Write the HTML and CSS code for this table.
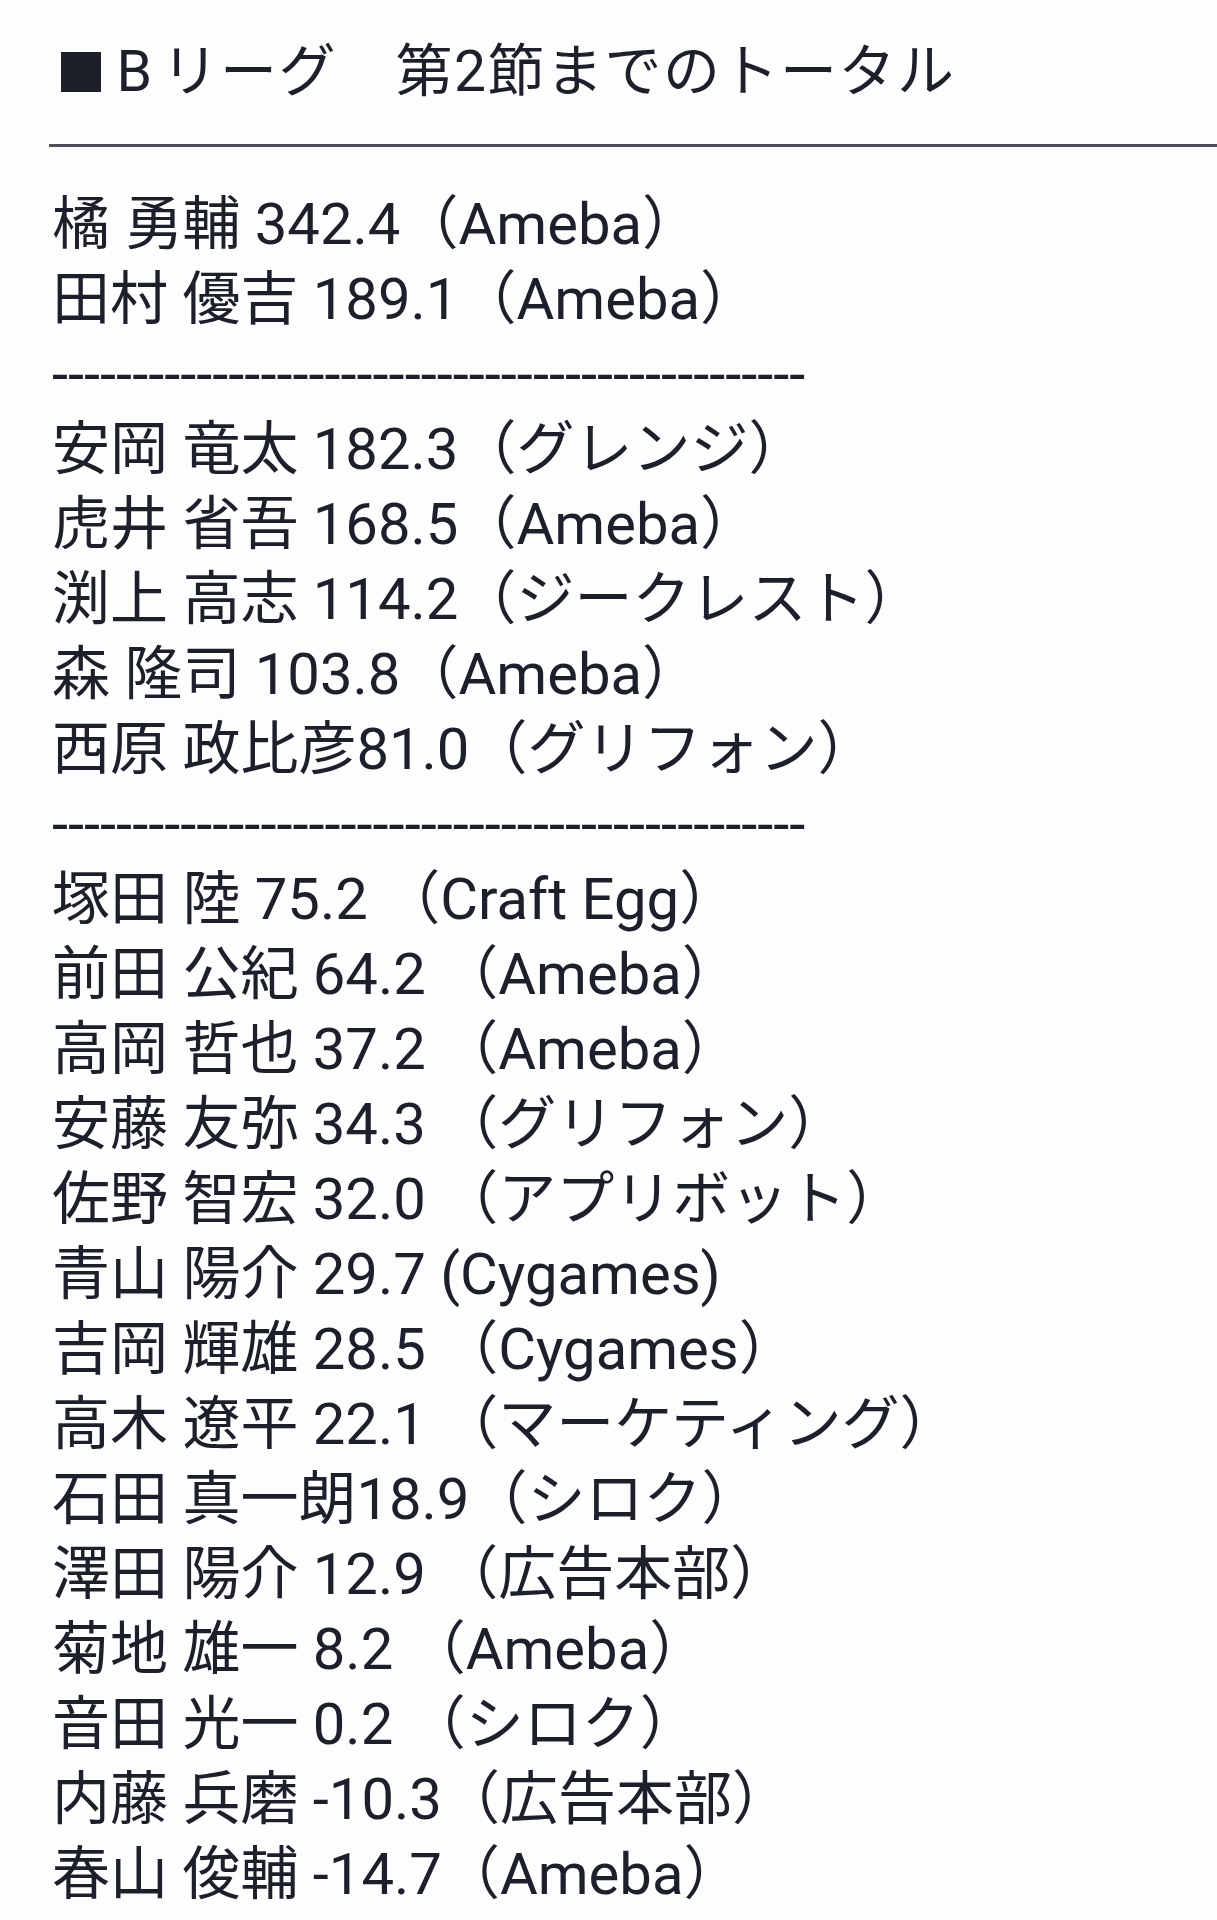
FILE: index.html
```html
<!DOCTYPE html>
<html lang="ja">
<head>
<meta charset="utf-8">
<title>Bリーグ 第2節までのトータル</title>
<link rel="stylesheet" href="styles.css">
</head>
<body>
<main class="page">
  <h1 class="title"><span class="mark">■</span>B<span class="kana">リーグ</span>　第2節までのトータル</h1>
  <div class="rule"></div>
  <div class="list">
    <p class="row">橘 勇輔 342.4（Ameba）</p>
    <p class="row">田村 優吉 189.1（Ameba）</p>
    <p class="row sep">-----------------------------------------------</p>
    <p class="row">安岡 竜太 182.3（グレンジ）</p>
    <p class="row">虎井 省吾 168.5（Ameba）</p>
    <p class="row">渕上 高志 114.2（ジークレスト）</p>
    <p class="row">森 隆司 103.8（Ameba）</p>
    <p class="row">西原 政比彦81.0（グリフォン）</p>
    <p class="row sep">-----------------------------------------------</p>
    <p class="row">塚田 陸 75.2 （Craft Egg）</p>
    <p class="row">前田 公紀 64.2 （Ameba）</p>
    <p class="row">高岡 哲也 37.2 （Ameba）</p>
    <p class="row">安藤 友弥 34.3 （グリフォン）</p>
    <p class="row">佐野 智宏 32.0 （アプリボット）</p>
    <p class="row">青山 陽介 29.7 (Cygames)</p>
    <p class="row">吉岡 輝雄 28.5 （Cygames）</p>
    <p class="row">高木 遼平 22.1 （マーケティング）</p>
    <p class="row">石田 真一朗18.9（シロク）</p>
    <p class="row">澤田 陽介 12.9 （広告本部）</p>
    <p class="row">菊地 雄一 8.2 （Ameba）</p>
    <p class="row">音田 光一 0.2 （シロク）</p>
    <p class="row">内藤 兵磨 -10.3（広告本部）</p>
    <p class="row">春山 俊輔 -14.7（Ameba）</p>
  </div>
</main>
</body>
</html>
```
FILE: styles.css
```css
html, body {
  margin: 0;
  padding: 0;
  background: #fdfdfd;
}
.page {
  font-family: Roboto, "Noto Sans CJK JP", "Noto Sans", sans-serif;
  color: #1b202b;
  width: 1217px;
  min-height: 1920px;
  overflow: hidden;
}
.title {
  margin: 0;
  padding: 42px 0 0 56px;
  font-size: 57px;
  font-weight: 400;
  line-height: 60px;
  height: 60px;
  letter-spacing: 1.5px;
}
.mark {
  font-size: 50px;
  margin-right: 9px;
}
.kana {
  margin-left: 8px;
}
.rule {
  margin: 42px 0 0 49px;
  border-top: 3px solid #4b5056;
}
.list {
  margin: 40px 0 0 52px;
}
.row {
  margin: 0;
  font-size: 58px;
  line-height: 75px;
  white-space: nowrap;
}
```
